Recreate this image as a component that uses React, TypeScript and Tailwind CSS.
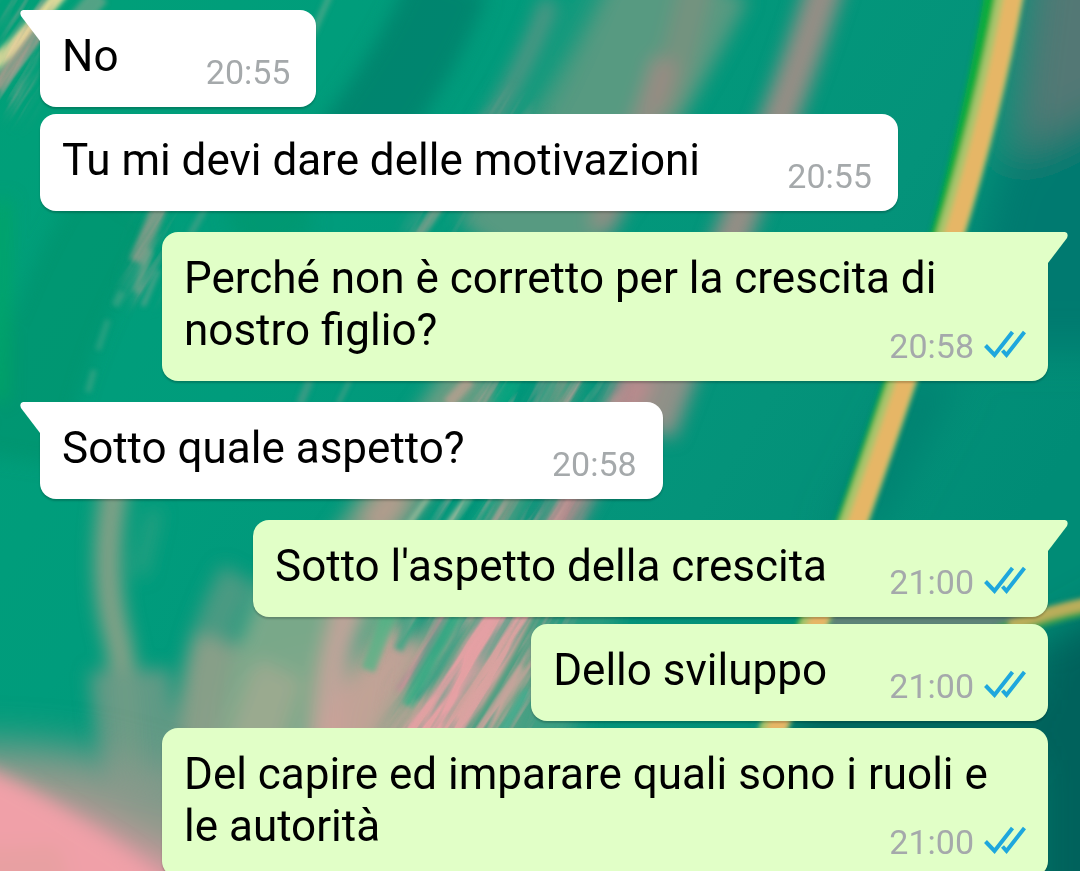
import { useId } from 'react';

type Message = {
  id: number;
  text: string;
  time: string;
  mine: boolean;
  first: boolean;
};

const messages: Message[] = [
  { id: 1, text: 'No', time: '20:55', mine: false, first: true },
  { id: 2, text: 'Tu mi devi dare delle motivazioni', time: '20:55', mine: false, first: false },
  { id: 3, text: 'Perché non è corretto per la crescita di nostro figlio?', time: '20:58', mine: true, first: true },
  { id: 4, text: 'Sotto quale aspetto?', time: '20:58', mine: false, first: true },
  { id: 5, text: "Sotto l'aspetto della crescita", time: '21:00', mine: true, first: true },
  { id: 6, text: 'Dello sviluppo', time: '21:00', mine: true, first: false },
  { id: 7, text: 'Del capire ed imparare quali sono i ruoli e le autorità', time: '21:00', mine: true, first: false },
];

// [path, color, width, opacity]
type Stroke = [string, string, number, number];

const softBands: Stroke[] = [
  ['M450 -20 Q420 60 350 150', '#00806c', 80, 0.8],
  ['M300 200 L240 240', '#009468', 60, 0.5],
  ['M120 200 Q40 330 20 460', '#009068', 90, 0.5],
  ['M3 200 L0 400', '#00a860', 14, 0.8],
  ['M690 -30 Q620 110 510 260', '#5f9a82', 130, 0.9],
  ['M600 -30 Q570 60 520 140', '#2f9a80', 30, 0.5],
  ['M700 -30 Q680 60 660 110', '#7d9080', 34, 0.8],
  ['M665 60 Q650 120 600 230', '#a58a86', 26, 0.75],
  ['M830 -30 Q800 70 750 190 L700 320', '#9d8d86', 36, 0.95],
  ['M680 350 L650 430', '#a0908a', 50, 0.9],
  ['M550 0 Q530 60 480 140', '#6d9386', 16, 0.9],
  ['M640 370 L540 560', '#c9898f', 34, 0.9],
  ['M570 370 L490 540', '#b99a8c', 22, 0.8],
  ['M480 370 L350 560', '#829f86', 60, 0.8],
  ['M400 490 L370 530', '#c69c90', 30, 0.8],
  ['M118 470 Q98 570 118 640 Q128 690 130 780', '#87a087', 26, 1],
  ['M130 670 Q132 720 150 800', '#6a9a86', 80, 0.9],
  ['M155 510 L140 575', '#3ea183', 10, 0.9],
  ['M240 575 Q195 650 190 770', '#5d9a84', 40, 0.8],
  ['M220 640 Q205 690 205 760', '#8f9f8a', 50, 0.9],
  ['M330 580 Q275 660 270 780', '#7fa98a', 110, 0.95],
  ['M280 670 Q260 710 250 770', '#a5aa92', 50, 0.7],
  ['M350 600 Q325 680 325 770', '#c8a39b', 28, 0.9],
  ['M395 600 Q360 690 360 770', '#7dad8a', 30, 0.8],
  ['M410 640 Q360 700 330 770', '#cda199', 50, 0.85],
  ['M470 600 Q420 690 380 770', '#a0a48e', 44, 0.8],
  ['M600 600 L520 760', '#2f9d80', 50, 0.8],
];

const streaks: Stroke[] = [
  ['M62 -8 Q30 30 -8 66', '#f1df9c', 13, 0.95],
  ['M46 22 L-5 88', '#c59a90', 13, 0.8],
  ['M100 -5 L60 40', '#8aa58e', 20, 0.6],
  ['M330 -5 L310 40', '#5aa98c', 6, 0.7],
  ['M160 205 L137 262', '#9b9d8b', 16, 0.7],
  ['M150 250 L136 292', '#a5a18f', 6, 0.7],
  ['M158 270 L143 306', '#7fa593', 4, 0.7],
  ['M207 205 L190 235', '#5ba08b', 6, 0.6],
  ['M122 292 L115 306', '#55a98c', 8, 0.5],
  ['M108 320 L98 350', '#4aa88b', 6, 0.5],
  ['M94 370 L88 392', '#55a98c', 6, 0.5],
  ['M440 205 L415 240', '#8f9e8c', 10, 0.7],
  ['M310 380 L300 404', '#4f9b88', 8, 0.7],
  ['M350 380 L338 404', '#62a08c', 3, 0.8],
  ['M470 380 L448 404', '#c59f92', 12, 0.7],
  ['M512 380 L500 404', '#00a880', 18, 0.7],
  ['M430 495 L408 525', '#b7c3a2', 4, 0.9],
  ['M470 495 L448 525', '#d0c4a8', 6, 0.8],
  ['M452 495 L430 525', '#00a07f', 5, 0.8],
  ['M494 495 L474 525', '#10a080', 10, 0.8],
  ['M392 605 Q380 640 368 670', '#4db585', 14, 0.7],
  ['M418 608 L398 650', '#3aa685', 10, 0.8],
  ['M447 608 Q430 650 398 690', '#c08a97', 6, 0.8],
  ['M458 612 Q430 660 408 706', '#3fae86', 12, 0.9],
  ['M470 612 Q444 670 416 700', '#2f9f84', 8, 0.7],
  ['M500 605 Q470 670 410 745', '#eba0a5', 28, 0.95],
  ['M526 605 Q490 690 440 745', '#e6a2a4', 20, 0.9],
  ['M545 605 Q510 680 468 740', '#4a9f82', 16, 0.9],
  ['M522 668 L480 735', '#b3aa9a', 7, 0.8],
  ['M528 690 L500 735', '#3fae90', 8, 0.8],
];

function Strokes({ items }: { items: Stroke[] }) {
  return items.map(([d, color, width, opacity]) => (
    <path key={d} d={d} stroke={color} strokeWidth={width} opacity={opacity} />
  ));
}

function Wallpaper() {
  const id = useId();
  return (
    <svg
      aria-hidden="true"
      viewBox="0 0 1080 871"
      preserveAspectRatio="xMidYMid slice"
      className="absolute inset-0 -z-10 h-full w-full"
      fill="none"
    >
      <defs>
        <linearGradient id={`${id}base`} x1="0" y1="0" x2="1" y2="0.5">
          <stop offset="0" stopColor="#00a078" />
          <stop offset="0.35" stopColor="#009c7c" />
          <stop offset="0.75" stopColor="#04937a" />
          <stop offset="1" stopColor="#008c76" />
        </linearGradient>
        <filter id={`${id}wide`} filterUnits="userSpaceOnUse" x="-100" y="-100" width="1300" height="1100">
          <feGaussianBlur stdDeviation="20" />
        </filter>
        <filter id={`${id}soft`} filterUnits="userSpaceOnUse" x="-60" y="-60" width="1200" height="1000">
          <feGaussianBlur stdDeviation="9" />
        </filter>
        <filter id={`${id}fine`} filterUnits="userSpaceOnUse" x="-60" y="-60" width="1200" height="1000">
          <feGaussianBlur stdDeviation="2.5" />
        </filter>
        {/* long thin fibres, light and dark */}
        <filter id={`${id}light`} x="0" y="0" width="100%" height="100%" colorInterpolationFilters="sRGB">
          <feTurbulence type="fractalNoise" baseFrequency="0.008 0.09" numOctaves="3" seed="4" />
          <feColorMatrix values="0 0 0 0 0.84  0 0 0 0 0.64  0 0 0 0 0.62  4 0 0 0 -1.9" />
        </filter>
        <filter id={`${id}dark`} x="0" y="0" width="100%" height="100%" colorInterpolationFilters="sRGB">
          <feTurbulence type="fractalNoise" baseFrequency="0.008 0.08" numOctaves="3" seed="11" />
          <feColorMatrix values="0 0 0 0 0.12  0 0 0 0 0.63  0 0 0 0 0.5  4 0 0 0 -1.9" />
        </filter>
        <mask id={`${id}brush`} maskUnits="userSpaceOnUse" x="0" y="0" width="1080" height="871">
          <g filter={`url(#${id}soft)`} stroke="#fff">
            <path d="M560 360 Q500 500 450 760" strokeWidth="130" opacity="0.75" />
            <path d="M545 600 L490 760" strokeWidth="60" />
            <path d="M520 100 Q480 160 420 250" strokeWidth="50" opacity="0.3" />
            <path d="M20 -20 Q40 60 5 110" strokeWidth="44" opacity="0.7" />
            <path d="M165 200 L140 300" strokeWidth="28" opacity="0.6" />
          </g>
        </mask>
      </defs>
      <rect width="1080" height="871" fill={`url(#${id}base)`} />

      {/* darker leaf on the right */}
      <g filter={`url(#${id}wide)`}>
        <path d="M1035 -60 H1160 V110 L1010 150 Z" fill="#527874" />
        <path d="M1000 160 L1160 80 V350 H950 Z" fill="#007a70" />
        <path d="M910 380 L960 370 L880 520 L830 540 Z" fill="#007f70" />
        <path d="M1030 650 L1140 590 V930 H1030 Z" fill="#00625b" />
        <path d="M800 700 H1100 V760 H780 Z" fill="#00625b" />
      </g>
      <path d="M830 621 H1020" stroke="#5f8378" strokeWidth="14" filter={`url(#${id}fine)`} />

      {/* pale haze under the brush marks */}
      <path d="M190 780 Q200 690 280 660 L560 610 V780 Z" fill="#8fa78d" opacity="0.9" filter={`url(#${id}wide)`} />
      <g filter={`url(#${id}soft)`}>
        <Strokes items={softBands} />
      </g>

      {/* pink petal in the bottom corner */}
      <g filter={`url(#${id}wide)`}>
        <path d="M-80 745 Q60 738 140 765 L280 800 V960 H-80 Z" fill="#8a9a8b" />
        <path d="M-80 800 Q80 800 120 835 L260 900 V960 H-80 Z" fill="#d898a0" />
      </g>
      <g filter={`url(#${id}soft)`}>
        <path d="M-40 755 Q30 785 80 820 Q130 850 190 900 H-40 Z" fill="#f0a0a8" />
        <path d="M-40 850 L60 845 L75 900 H-40 Z" fill="#e8a0a2" />
      </g>

      <g filter={`url(#${id}fine)`}>
        <Strokes items={streaks} />
      </g>
      <g mask={`url(#${id}brush)`}>
        <g transform="rotate(-58 540 435)">
          <rect x="-200" y="-300" width="1500" height="1500" filter={`url(#${id}light)`} opacity="0.7" />
          <rect x="-200" y="-300" width="1500" height="1500" filter={`url(#${id}dark)`} opacity="0.6" />
        </g>
      </g>

      {/* yellow stem */}
      <g filter={`url(#${id}fine)`}>
        <path d="M992 -10 Q972 110 936 240 Q886 400 842 525 Q804 620 764 735" stroke="#08ac3c" strokeWidth="14" />
        <path d="M1011 -10 Q989 110 949 240 Q899 395 853 525 Q812 630 771 735" stroke="#a9c46c" strokeWidth="28" />
        <path d="M1014 -10 Q992 110 952 240 Q902 395 856 525 Q815 630 774 735" stroke="#e6b666" strokeWidth="18" />
        <path d="M1000 634 Q1045 614 1090 606" stroke="#3fa050" strokeWidth="18" />
        <path d="M1010 626 Q1045 612 1090 603" stroke="#b9ad5a" strokeWidth="12" />
      </g>
    </svg>
  );
}

function ReadTicks() {
  return (
    <svg viewBox="0 0 42 34" className="h-[34px] w-[42px]" fill="none" stroke="#1ea7dd" strokeWidth="4" role="img" aria-label="Letto">
      <path d="M1.5 15.5 L10.5 25 L28.5 2" />
      <path d="M18.5 20.5 L22.5 25 L40.5 2" />
    </svg>
  );
}

function Tail({ mine }: { mine: boolean }) {
  return (
    <svg
      aria-hidden="true"
      viewBox="0 0 36 32"
      className={mine ? 'absolute top-0 -right-5 h-8 w-9 text-[#e1ffc7]' : 'absolute top-0 -left-5 h-8 w-9 -scale-x-100 text-white'}
    >
      <path d="M0 0 H33 Q37 1 35 6 L16 31 H0 Z" fill="currentColor" />
    </svg>
  );
}

function Bubble({ message }: { message: Message }) {
  const { text, time, mine, first } = message;
  return (
    <li className={`flex ${mine ? 'justify-end' : 'justify-start'} ${first ? 'mt-[21px] first:mt-0' : 'mt-[7px]'}`}>
      <div
        className={`relative grid max-w-[886px] rounded-2xl pt-5 pb-[25px] pl-[22px] shadow-[0_2px_2px_rgba(0,0,0,0.2)] ${
          mine ? 'bg-[#e1ffc7] pr-[22px]' : 'bg-white pr-[26px]'
        } ${first ? (mine ? 'rounded-tr-none' : 'rounded-tl-none') : ''}`}
      >
        {first && <Tail mine={mine} />}
        <p className="relative col-start-1 row-start-1 text-[44px] leading-[52px] text-black">
          {text}
          {/* keeps the last line clear of the time */}
          <span className={`inline-block h-px ${mine ? 'w-[199px]' : 'w-[172px]'}`} />
        </p>
        <div className="relative col-start-1 row-start-1 -mb-2.5 flex items-center gap-2.5 self-end justify-self-end text-[34px] leading-[39px] text-[#a5a9ab]">
          <time>{time}</time>
          {mine && <ReadTicks />}
        </div>
      </div>
    </li>
  );
}

export default function App() {
  return (
    <main className="relative isolate h-screen overflow-hidden bg-[#009a7c] font-[Roboto,sans-serif]">
      <Wallpaper />
      <ul className="flex flex-col pt-2.5 pr-8 pl-10">
        {messages.map((message) => (
          <Bubble key={message.id} message={message} />
        ))}
      </ul>
    </main>
  );
}
